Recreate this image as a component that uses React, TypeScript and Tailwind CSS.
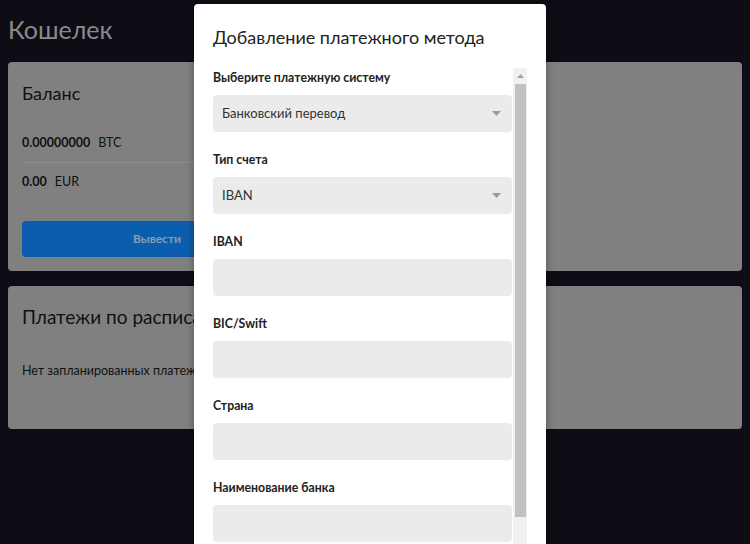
import React from 'react';

const fields: { label: string; value?: string; select?: boolean }[] = [
  { label: 'Выберите платежную систему', value: 'Банковский перевод', select: true },
  { label: 'Тип счета', value: 'IBAN', select: true },
  { label: 'IBAN' },
  { label: 'BIC/Swift' },
  { label: 'Страна' },
  { label: 'Наименование банка' },
];

const Caret = () => (
  <svg width="9" height="5" viewBox="0 0 9 5" className="shrink-0">
    <path d="M0 0 L9 0 L4.5 5 Z" fill="#9a9a9a" />
  </svg>
);

export default function App() {
  return (
    <div
      className="relative h-[544px] w-[750px] overflow-hidden bg-[#0e0d15]"
      style={{ fontFamily: 'Lato, "Noto Sans", sans-serif' }}
    >
      {/* Page */}
      <div className="px-2 pt-[12px]">
        <h1 className="text-[25px] leading-[34px] text-[#8a8a8a]">Кошелек</h1>

        <div className="mt-[16px] rounded-[4px] bg-[#808080] px-[14px] pt-[19px] pb-[14px]">
          <h2 className="text-[18px] leading-[24px] text-[#111]">Баланс</h2>
          <div className="mt-[20px] w-[270px]">
            <div className="flex h-[38px] items-center gap-[8px] border-b border-[#8e8e8e] text-[12.5px] text-[#111]">
              <span className="font-bold">0.00000000</span>
              <span>BTC</span>
            </div>
            <div className="flex h-[38px] items-center gap-[8px] text-[12.5px] text-[#111]">
              <span className="font-bold">0.00</span>
              <span>EUR</span>
            </div>
            <button className="mt-[20px] flex h-[36px] w-full items-center justify-center rounded-[4px] bg-[#0b5ead] text-[12px] font-bold text-[#8c9bad]">
              Вывести
            </button>
          </div>
        </div>

        <div className="mt-[15px] h-[143px] rounded-[4px] bg-[#808080] px-[14px] pt-[18px]">
          <h2 className="text-[19px] leading-[26px] text-[#111]">Платежи по расписанию</h2>
          <p className="mt-[31px] text-[12.5px] leading-[20px] text-[#111]">Нет запланированных платежей</p>
        </div>
      </div>

      {/* Modal */}
      <div className="absolute left-[194px] top-[4px] h-[560px] w-[352px] rounded-[4px] bg-white shadow-[0_0_8px_rgba(0,0,0,0.35)]">
        <h3 className="px-[19px] pt-[20px] text-[18px] leading-[26px] text-[#222]">Добавление платежного метода</h3>
        <div className="mt-[18px] flex px-[19px]">
          <div className="w-[299px] shrink-0">
            {fields.map((f) => (
              <div key={f.label} className="mb-[18px]">
                <div className="mb-[7px] text-[12.3px] font-bold leading-[20px] text-[#222]">{f.label}</div>
                <div className="flex h-[37px] items-center justify-between rounded-[4px] bg-[#ebebeb] pl-[9px] pr-[11px] text-[13px] text-[#333]">
                  <span>{f.value}</span>
                  {f.select && <Caret />}
                </div>
              </div>
            ))}
          </div>
          <div className="ml-[1px] flex h-[480px] w-[14px] shrink-0 flex-col items-center bg-[#f1f1f1]">
            <div className="flex h-[15px] w-full items-center justify-center">
              <svg width="7" height="4" viewBox="0 0 7 4">
                <path d="M0 4 L3.5 0 L7 4 Z" fill="#a3a3a3" />
              </svg>
            </div>
            <div className="mt-[1px] h-[433px] w-[11px] bg-[#c1c1c1]" />
          </div>
        </div>
      </div>
    </div>
  );
}
